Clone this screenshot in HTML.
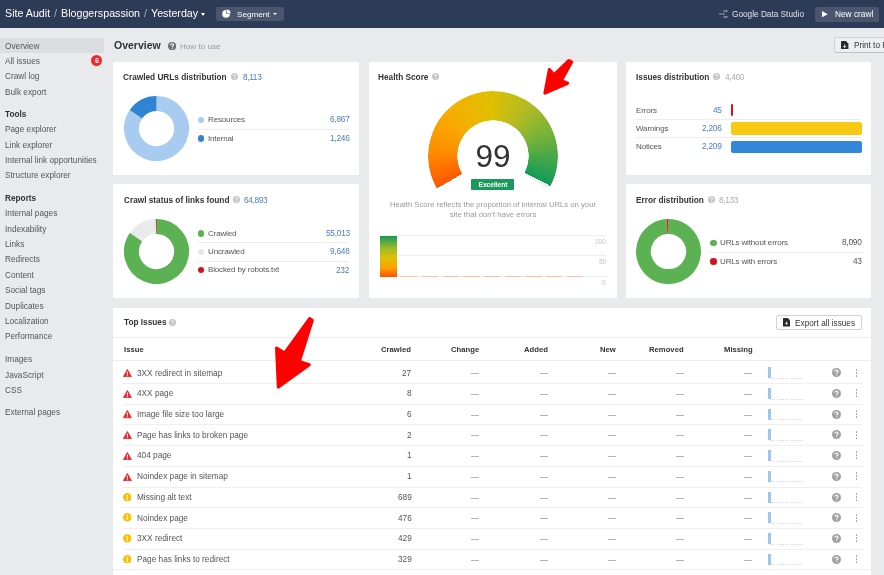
<!DOCTYPE html><html><head><meta charset="utf-8"><style>
html,body{margin:0;padding:0;width:884px;height:575px;overflow:hidden;background:#e9eaec;font-family:"Liberation Sans",sans-serif}
.t{position:absolute;white-space:nowrap;line-height:1.2;will-change:transform}
.r{position:absolute}
</style></head><body>
<div class="r" style="left:0.00px;top:0.00px;width:884.00px;height:28.00px;background:#2c3b56;"></div>
<div class="t" style="left:4.75px;top:6.87px;font-size:10.7px;color:#fff;">Site Audit</div>
<div class="t" style="left:53.90px;top:6.87px;font-size:10.7px;color:#a9b0bf;">/</div>
<div class="t" style="left:61.40px;top:6.87px;font-size:10.7px;color:#fff;">Bloggerspassion</div>
<div class="t" style="left:144.00px;top:6.87px;font-size:10.7px;color:#a9b0bf;">/</div>
<div class="t" style="left:151.20px;top:6.87px;font-size:10.7px;color:#fff;">Yesterday</div>
<div class="r" style="left:201px;top:12.5px;width:0;height:0;border-left:2.5px solid transparent;border-right:2.5px solid transparent;border-top:3px solid #fff"></div>
<div class="r" style="left:216.00px;top:6.80px;width:68.00px;height:14.70px;background:#4a566e;border-radius:2px"></div>
<svg class="r" style="left:221.8px;top:9.0px" width="9" height="9" viewBox="0 0 10 10"><path d="M4.4 1.2 A4.3 4.3 0 1 0 8.8 5.6 L4.4 5.6 Z" fill="#fff"/><path d="M5.1 0.5 A4.3 4.3 0 0 1 9.5 4.9 L5.1 4.9Z" fill="#fff"/></svg>
<div class="t" style="left:236.50px;top:10.13px;font-size:8.1px;color:#fff;">Segment</div>
<div class="r" style="left:273px;top:13px;width:0;height:0;border-left:2.2px solid transparent;border-right:2.2px solid transparent;border-top:2.6px solid #fff"></div>
<svg class="r" style="left:719px;top:10px" width="9" height="8" viewBox="0 0 9 8"><g fill="#9aa3b3"><circle cx="7.5" cy="1" r="1"/><circle cx="7.5" cy="7" r="1"/><circle cx="4.5" cy="4" r="1"/><rect x="0" y="3.5" width="3" height="1"/><rect x="4" y="0.5" width="3" height="1"/><rect x="4" y="6.5" width="3" height="1"/></g></svg>
<div class="t" style="left:731.60px;top:10.09px;font-size:8.25px;color:#dfe2e8;">Google Data Studio</div>
<div class="r" style="left:814.70px;top:6.70px;width:64.70px;height:14.90px;background:#4a566e;border-radius:2px"></div>
<svg class="r" style="left:822.4px;top:11.4px" width="5.8" height="6.4" viewBox="0 0 6 6.4"><path d="M0 0 L6 3.2 L0 6.4Z" fill="#fff"/></svg>
<div class="t" style="left:834.90px;top:10.04px;font-size:8.3px;color:#fff;">New crawl</div>
<div class="r" style="left:0.00px;top:37.90px;width:104.00px;height:14.70px;background:#dcdddf;"></div>
<div class="t" style="left:4.90px;top:41.59px;font-size:8.25px;color:#555;">Overview</div>
<div class="t" style="left:4.90px;top:56.99px;font-size:8.25px;color:#555;">All issues</div>
<div class="t" style="left:4.90px;top:72.39px;font-size:8.25px;color:#555;">Crawl log</div>
<div class="t" style="left:4.90px;top:87.79px;font-size:8.25px;color:#555;">Bulk export</div>
<div class="r" style="left:91.10px;top:55.40px;width:10.8px;height:10.8px;border-radius:50%;background:#ee2a2f"></div>
<div class="t" style="left:-103.40px;width:400px;text-align:center;top:56.69px;font-size:7.2px;color:#fff;font-weight:bold;">6</div>
<div class="t" style="left:4.90px;top:109.79px;font-size:8.25px;color:#333;font-weight:bold;">Tools</div>
<div class="t" style="left:4.90px;top:125.19px;font-size:8.25px;color:#555;">Page explorer</div>
<div class="t" style="left:4.90px;top:140.59px;font-size:8.25px;color:#555;">Link explorer</div>
<div class="t" style="left:4.90px;top:155.99px;font-size:8.25px;color:#555;">Internal link opportunities</div>
<div class="t" style="left:4.90px;top:171.39px;font-size:8.25px;color:#555;">Structure explorer</div>
<div class="t" style="left:4.90px;top:193.89px;font-size:8.25px;color:#333;font-weight:bold;">Reports</div>
<div class="t" style="left:4.90px;top:209.29px;font-size:8.25px;color:#555;">Internal pages</div>
<div class="t" style="left:4.90px;top:224.69px;font-size:8.25px;color:#555;">Indexability</div>
<div class="t" style="left:4.90px;top:240.09px;font-size:8.25px;color:#555;">Links</div>
<div class="t" style="left:4.90px;top:255.49px;font-size:8.25px;color:#555;">Redirects</div>
<div class="t" style="left:4.90px;top:270.89px;font-size:8.25px;color:#555;">Content</div>
<div class="t" style="left:4.90px;top:286.29px;font-size:8.25px;color:#555;">Social tags</div>
<div class="t" style="left:4.90px;top:301.69px;font-size:8.25px;color:#555;">Duplicates</div>
<div class="t" style="left:4.90px;top:317.09px;font-size:8.25px;color:#555;">Localization</div>
<div class="t" style="left:4.90px;top:332.49px;font-size:8.25px;color:#555;">Performance</div>
<div class="t" style="left:4.90px;top:355.19px;font-size:8.25px;color:#555;">Images</div>
<div class="t" style="left:4.90px;top:370.59px;font-size:8.25px;color:#555;">JavaScript</div>
<div class="t" style="left:4.90px;top:385.99px;font-size:8.25px;color:#555;">CSS</div>
<div class="t" style="left:4.90px;top:408.39px;font-size:8.25px;color:#555;">External pages</div>
<div class="t" style="left:114.00px;top:38.56px;font-size:10.5px;color:#333;font-weight:bold;">Overview</div>
<svg class="r" style="left:168.10px;top:41.90px" width="8.2" height="8.2" viewBox="0 0 10 10"><circle cx="5" cy="5" r="5" fill="#6f6f6f"/><path d="M3.3 3.9 C3.3 2.8 4.1 2.2 5 2.2 C6 2.2 6.7 2.8 6.7 3.7 C6.7 4.7 5.3 4.9 5.3 6.1" fill="none" stroke="#fff" stroke-width="1.3"/><circle cx="5.3" cy="7.6" r="0.75" fill="#fff"/></svg>
<div class="t" style="left:180.10px;top:42.13px;font-size:8.1px;color:#9a9a9a;">How to use</div>
<div class="r" style="left:834.30px;top:37.00px;width:60.00px;height:15.60px;background:#eeeff0;border:1px solid #cfd0d2;border-bottom-color:#bfc0c2;border-radius:2px;box-sizing:border-box"></div>
<svg class="r" style="left:841.2px;top:40.6px" width="7.4" height="8.8" viewBox="0 0 7.4 8.8"><path d="M0.6 0 H4.9 L7.4 2.5 V8.2 Q7.4 8.8 6.8 8.8 H0.6 Q0 8.8 0 8.2 V0.6 Q0 0 0.6 0Z" fill="#2a2a2a"/><path d="M3.7 3.6 V6.4 M2.5 5.2 L3.7 6.5 L4.9 5.2" stroke="#fff" stroke-width="0.9" fill="none"/></svg>
<div class="t" style="left:853.70px;top:40.84px;font-size:8.2px;color:#333;">Print to PDF</div>
<div class="r" style="left:113.30px;top:61.50px;width:245.50px;height:113.30px;background:#fff;"></div>
<div class="r" style="left:368.50px;top:61.50px;width:248.70px;height:236.50px;background:#fff;"></div>
<div class="r" style="left:626.10px;top:61.50px;width:245.40px;height:113.30px;background:#fff;"></div>
<div class="r" style="left:113.30px;top:184.40px;width:245.50px;height:113.50px;background:#fff;"></div>
<div class="r" style="left:626.10px;top:184.40px;width:245.40px;height:113.50px;background:#fff;"></div>
<div class="r" style="left:113.30px;top:307.80px;width:758.20px;height:280.00px;background:#fff;"></div>
<div class="t" style="left:123.30px;top:72.69px;font-size:8.25px;color:#333;font-weight:bold;">Crawled URLs distribution</div>
<svg class="r" style="left:230.80px;top:73.00px" width="7" height="7" viewBox="0 0 10 10"><circle cx="5" cy="5" r="5" fill="#c4c4c4"/><path d="M3.3 3.9 C3.3 2.8 4.1 2.2 5 2.2 C6 2.2 6.7 2.8 6.7 3.7 C6.7 4.7 5.3 4.9 5.3 6.1" fill="none" stroke="#fff" stroke-width="1.3"/><circle cx="5.3" cy="7.6" r="0.75" fill="#fff"/></svg>
<div class="t" style="left:242.70px;top:72.74px;font-size:8.3px;color:#4a7ec0;letter-spacing:-0.35px">8,113</div>
<svg class="r" style="left:123.60px;top:95.80px" width="65.00" height="65.00" viewBox="-32.5 -32.5 65.0 65.0"><path d="M0.000 -25.050 A25.05 25.05 0 1 1 -20.592 -14.264" fill="none" stroke="#a8ccef" stroke-width="14.899999999999999"/><path d="M-20.592 -14.264 A25.05 25.05 0 0 1 0.000 -25.050" fill="none" stroke="#2f84d4" stroke-width="14.899999999999999"/></svg>
<div class="r" style="left:197.70px;top:116.60px;width:6.6px;height:6.6px;border-radius:50%;background:#a8ccef"></div>
<div class="t" style="left:207.60px;top:115.13px;font-size:8.0px;color:#555;letter-spacing:-0.15px">Resources</div>
<div class="t" style="right:534.40px;top:115.34px;font-size:8.3px;color:#4a7ec0;letter-spacing:-0.25px">6,867</div>
<div class="r" style="left:197.90px;top:129.10px;width:151.70px;height:0.80px;background:#ededed;"></div>
<div class="r" style="left:197.70px;top:135.00px;width:6.6px;height:6.6px;border-radius:50%;background:#2f84d4"></div>
<div class="t" style="left:207.60px;top:133.53px;font-size:8.0px;color:#555;letter-spacing:-0.15px">Internal</div>
<div class="t" style="right:534.40px;top:133.74px;font-size:8.3px;color:#4a7ec0;letter-spacing:-0.25px">1,246</div>
<div class="t" style="left:635.70px;top:72.69px;font-size:8.25px;color:#333;font-weight:bold;">Issues distribution</div>
<svg class="r" style="left:712.70px;top:73.00px" width="7" height="7" viewBox="0 0 10 10"><circle cx="5" cy="5" r="5" fill="#c4c4c4"/><path d="M3.3 3.9 C3.3 2.8 4.1 2.2 5 2.2 C6 2.2 6.7 2.8 6.7 3.7 C6.7 4.7 5.3 4.9 5.3 6.1" fill="none" stroke="#fff" stroke-width="1.3"/><circle cx="5.3" cy="7.6" r="0.75" fill="#fff"/></svg>
<div class="t" style="left:724.80px;top:72.74px;font-size:8.3px;color:#ababab;letter-spacing:-0.35px">4,460</div>
<div class="t" style="left:635.70px;top:105.63px;font-size:8.0px;color:#555;letter-spacing:-0.15px">Errors</div>
<div class="t" style="right:162.50px;top:105.84px;font-size:8.3px;color:#4a7ec0;letter-spacing:-0.25px">45</div>
<div class="r" style="left:730.90px;top:103.70px;width:2.50px;height:12.60px;background:#d0141b;border-radius:1px"></div>
<div class="r" style="left:635.70px;top:118.60px;width:225.30px;height:0.80px;background:#ededed;"></div>
<div class="t" style="left:635.70px;top:123.73px;font-size:8.0px;color:#555;letter-spacing:-0.15px">Warnings</div>
<div class="t" style="right:162.50px;top:123.94px;font-size:8.3px;color:#4a7ec0;letter-spacing:-0.25px">2,206</div>
<div class="r" style="left:730.90px;top:121.80px;width:131.10px;height:13.10px;background:#f8c913;border-radius:2px"></div>
<div class="r" style="left:635.70px;top:136.70px;width:225.30px;height:0.80px;background:#ededed;"></div>
<div class="t" style="left:635.70px;top:141.83px;font-size:8.0px;color:#555;letter-spacing:-0.15px">Notices</div>
<div class="t" style="right:162.50px;top:142.04px;font-size:8.3px;color:#4a7ec0;letter-spacing:-0.25px">2,209</div>
<div class="r" style="left:730.90px;top:140.50px;width:131.10px;height:12.80px;background:#3487d8;border-radius:2px"></div>
<div class="t" style="left:123.50px;top:195.59px;font-size:8.25px;color:#333;font-weight:bold;">Crawl status of links found</div>
<svg class="r" style="left:233.00px;top:195.80px" width="7" height="7" viewBox="0 0 10 10"><circle cx="5" cy="5" r="5" fill="#c4c4c4"/><path d="M3.3 3.9 C3.3 2.8 4.1 2.2 5 2.2 C6 2.2 6.7 2.8 6.7 3.7 C6.7 4.7 5.3 4.9 5.3 6.1" fill="none" stroke="#fff" stroke-width="1.3"/><circle cx="5.3" cy="7.6" r="0.75" fill="#fff"/></svg>
<div class="t" style="left:244.20px;top:195.64px;font-size:8.3px;color:#4a7ec0;letter-spacing:-0.35px">64,893</div>
<svg class="r" style="left:123.80px;top:218.70px" width="65.00" height="65.00" viewBox="-32.5 -32.5 65.0 65.0"><path d="M0.000 -25.050 A25.05 25.05 0 1 1 -20.472 -14.436" fill="none" stroke="#5cb152" stroke-width="14.899999999999999"/><path d="M-20.472 -14.436 A25.05 25.05 0 0 1 -0.563 -25.044" fill="none" stroke="#e9eaec" stroke-width="14.899999999999999"/><path d="M-0.563 -25.044 A25.05 25.05 0 0 1 0.224 -25.049" fill="none" stroke="#b8302a" stroke-width="14.899999999999999"/></svg>
<div class="r" style="left:197.50px;top:230.20px;width:6.6px;height:6.6px;border-radius:50%;background:#5cb152"></div>
<div class="t" style="left:207.50px;top:228.73px;font-size:8.0px;color:#555;letter-spacing:-0.15px">Crawled</div>
<div class="t" style="right:534.50px;top:228.94px;font-size:8.3px;color:#4a7ec0;letter-spacing:-0.25px">55,013</div>
<div class="r" style="left:197.90px;top:242.30px;width:151.60px;height:0.80px;background:#ededed;"></div>
<div class="r" style="left:197.50px;top:248.60px;width:6.6px;height:6.6px;border-radius:50%;background:#e6e6e6"></div>
<div class="t" style="left:207.50px;top:247.03px;font-size:8.0px;color:#555;letter-spacing:-0.15px">Uncrawled</div>
<div class="t" style="right:534.50px;top:247.24px;font-size:8.3px;color:#4a7ec0;letter-spacing:-0.25px">9,648</div>
<div class="r" style="left:197.90px;top:260.60px;width:151.60px;height:0.80px;background:#ededed;"></div>
<div class="r" style="left:197.50px;top:266.90px;width:6.6px;height:6.6px;border-radius:50%;background:#d0141b"></div>
<div class="t" style="left:207.50px;top:265.33px;font-size:8.0px;color:#555;letter-spacing:-0.15px">Blocked by robots.txt</div>
<div class="t" style="right:534.50px;top:265.54px;font-size:8.3px;color:#4a7ec0;letter-spacing:-0.25px">232</div>
<div class="t" style="left:635.80px;top:195.59px;font-size:8.25px;color:#333;font-weight:bold;">Error distribution</div>
<svg class="r" style="left:707.60px;top:196.00px" width="7" height="7" viewBox="0 0 10 10"><circle cx="5" cy="5" r="5" fill="#c4c4c4"/><path d="M3.3 3.9 C3.3 2.8 4.1 2.2 5 2.2 C6 2.2 6.7 2.8 6.7 3.7 C6.7 4.7 5.3 4.9 5.3 6.1" fill="none" stroke="#fff" stroke-width="1.3"/><circle cx="5.3" cy="7.6" r="0.75" fill="#fff"/></svg>
<div class="t" style="left:719.20px;top:195.64px;font-size:8.3px;color:#ababab;letter-spacing:-0.35px">8,133</div>
<svg class="r" style="left:635.90px;top:218.90px" width="65.00" height="65.00" viewBox="-32.5 -32.5 65.0 65.0"><path d="M0.000 -25.050 A25.05 25.05 0 1 1 -1.573 -25.001" fill="none" stroke="#5cb152" stroke-width="14.899999999999999"/><path d="M-1.573 -25.001 A25.05 25.05 0 0 1 -0.000 -25.050" fill="none" stroke="#b3361f" stroke-width="14.899999999999999"/></svg>
<div class="r" style="left:710.20px;top:239.60px;width:6.6px;height:6.6px;border-radius:50%;background:#5cb152"></div>
<div class="t" style="left:720.00px;top:238.03px;font-size:8.0px;color:#555;letter-spacing:-0.15px">URLs without errors</div>
<div class="t" style="right:22.10px;top:238.24px;font-size:8.3px;color:#555;letter-spacing:-0.25px">8,090</div>
<div class="r" style="left:710.20px;top:252.00px;width:151.70px;height:0.80px;background:#ededed;"></div>
<div class="r" style="left:710.20px;top:258.10px;width:6.6px;height:6.6px;border-radius:50%;background:#d0141b"></div>
<div class="t" style="left:720.00px;top:256.53px;font-size:8.0px;color:#555;letter-spacing:-0.15px">URLs with errors</div>
<div class="t" style="right:22.10px;top:256.74px;font-size:8.3px;color:#555;letter-spacing:-0.25px">43</div>
<div class="t" style="left:377.90px;top:72.69px;font-size:8.25px;color:#333;font-weight:bold;">Health Score</div>
<svg class="r" style="left:432.00px;top:73.00px" width="7" height="7" viewBox="0 0 10 10"><circle cx="5" cy="5" r="5" fill="#c4c4c4"/><path d="M3.3 3.9 C3.3 2.8 4.1 2.2 5 2.2 C6 2.2 6.7 2.8 6.7 3.7 C6.7 4.7 5.3 4.9 5.3 6.1" fill="none" stroke="#fff" stroke-width="1.3"/><circle cx="5.3" cy="7.6" r="0.75" fill="#fff"/></svg>
<div class="r" style="left:427.70px;top:90.70px;width:130.0px;height:130.0px;border-radius:50%;background:conic-gradient(from 240deg, #ff5800 0deg, #fd8d00 35deg, #f6ae00 75deg, #dfc000 118deg, #b2bb22 155deg, #72b23a 190deg, #129b5a 237.6deg, #ececec 237.6deg, #ececec 240deg, transparent 240deg);-webkit-mask:radial-gradient(circle at center, transparent 35.4px, #000 35.9px);"></div>
<div class="t" style="left:292.70px;width:400px;text-align:center;top:137.59px;font-size:31.5px;color:#333;">99</div>
<div class="r" style="left:471.30px;top:179.30px;width:42.40px;height:10.50px;background:#19995a;border-radius:1px"></div>
<div class="t" style="left:292.50px;width:400px;text-align:center;top:181.05px;font-size:6.6px;color:#fff;font-weight:bold;">Excellent</div>
<div class="t" style="left:292.50px;width:400px;text-align:center;top:200.21px;font-size:7.7px;color:#999;">Health Score reflects the proportion of internal URLs on your</div>
<div class="t" style="left:292.50px;width:400px;text-align:center;top:209.81px;font-size:7.7px;color:#999;">site that don&#39;t have errors</div>
<div class="r" style="left:380.00px;top:235.20px;width:226.00px;height:0.80px;background:#eeeeee;"></div>
<div class="r" style="left:380.00px;top:255.00px;width:226.00px;height:0.80px;background:#eeeeee;"></div>
<div class="r" style="left:380.00px;top:276.00px;width:226.00px;height:0.80px;background:#eeeeee;"></div>
<div class="r" style="left:379.90px;top:235.80px;width:17.00px;height:41.00px;background:linear-gradient(#169a5b, #9cbb25 30%, #e2c000 55%, #fca000 78%, #ff5000);"></div>
<div class="r" style="left:401.10px;top:275.90px;width:16.40px;height:1.00px;background:#f6c1a6;"></div>
<div class="r" style="left:421.80px;top:275.90px;width:16.40px;height:1.00px;background:#f6c1a6;"></div>
<div class="r" style="left:442.50px;top:275.90px;width:16.40px;height:1.00px;background:#f6c1a6;"></div>
<div class="r" style="left:463.20px;top:275.90px;width:16.40px;height:1.00px;background:#f6c1a6;"></div>
<div class="r" style="left:483.90px;top:275.90px;width:16.40px;height:1.00px;background:#f6c1a6;"></div>
<div class="r" style="left:504.60px;top:275.90px;width:16.40px;height:1.00px;background:#f6c1a6;"></div>
<div class="r" style="left:525.30px;top:275.90px;width:16.40px;height:1.00px;background:#f6c1a6;"></div>
<div class="r" style="left:546.00px;top:275.90px;width:16.40px;height:1.00px;background:#f6c1a6;"></div>
<div class="r" style="left:566.70px;top:275.90px;width:16.40px;height:1.00px;background:#f6c1a6;"></div>
<div class="t" style="right:278.00px;top:237.55px;font-size:6.5px;color:#c2c2c2;">100</div>
<div class="t" style="right:278.00px;top:257.75px;font-size:6.5px;color:#c2c2c2;">50</div>
<div class="t" style="right:278.00px;top:278.95px;font-size:6.5px;color:#c2c2c2;">0</div>
<div class="t" style="left:123.50px;top:317.89px;font-size:8.25px;color:#333;font-weight:bold;">Top Issues</div>
<svg class="r" style="left:168.90px;top:318.80px" width="7" height="7" viewBox="0 0 10 10"><circle cx="5" cy="5" r="5" fill="#c4c4c4"/><path d="M3.3 3.9 C3.3 2.8 4.1 2.2 5 2.2 C6 2.2 6.7 2.8 6.7 3.7 C6.7 4.7 5.3 4.9 5.3 6.1" fill="none" stroke="#fff" stroke-width="1.3"/><circle cx="5.3" cy="7.6" r="0.75" fill="#fff"/></svg>
<div class="r" style="left:776.20px;top:315.10px;width:85.40px;height:15.10px;background:#fff;border:1px solid #d0d0d0;border-radius:2px;box-sizing:border-box"></div>
<svg class="r" style="left:782.8px;top:318.1px" width="7.2" height="8.7" viewBox="0 0 7.4 8.8"><path d="M0.6 0 H4.9 L7.4 2.5 V8.2 Q7.4 8.8 6.8 8.8 H0.6 Q0 8.8 0 8.2 V0.6 Q0 0 0.6 0Z" fill="#2a2a2a"/><path d="M3.7 3.6 V6.4 M2.5 5.2 L3.7 6.5 L4.9 5.2" stroke="#fff" stroke-width="0.9" fill="none"/></svg>
<div class="t" style="left:795.40px;top:318.59px;font-size:8.25px;color:#333;">Export all issues</div>
<div class="r" style="left:113.30px;top:337.30px;width:758.40px;height:0.80px;background:#ececec;"></div>
<div class="t" style="left:123.50px;top:345.21px;font-size:7.7px;color:#333;font-weight:bold;">Issue</div>
<div class="t" style="right:472.70px;top:345.21px;font-size:7.7px;color:#333;font-weight:bold;">Crawled</div>
<div class="t" style="right:404.80px;top:345.21px;font-size:7.7px;color:#333;font-weight:bold;">Change</div>
<div class="t" style="right:336.40px;top:345.21px;font-size:7.7px;color:#333;font-weight:bold;">Added</div>
<div class="t" style="right:268.30px;top:345.21px;font-size:7.7px;color:#333;font-weight:bold;">New</div>
<div class="t" style="right:200.20px;top:345.21px;font-size:7.7px;color:#333;font-weight:bold;">Removed</div>
<div class="t" style="right:131.60px;top:345.21px;font-size:7.7px;color:#333;font-weight:bold;">Missing</div>
<div class="r" style="left:113.30px;top:359.80px;width:758.40px;height:0.80px;background:#ececec;"></div>
<svg class="r" style="left:122.9px;top:369.00px" width="8.8" height="8.2" viewBox="0 0 10 9.3"><path d="M5 0.5 L9.6 8.8 H0.4Z" fill="#e8262b" stroke="#e8262b" stroke-width="0.9" stroke-linejoin="round"/><rect x="4.4" y="3.0" width="1.2" height="3.4" fill="#fff"/><rect x="4.4" y="7.0" width="1.2" height="1.1" fill="#fff"/></svg>
<div class="t" style="left:137.10px;top:368.59px;font-size:8.25px;color:#555;">3XX redirect in sitemap</div>
<div class="t" style="right:472.70px;top:368.59px;font-size:8.25px;color:#555;">27</div>
<div class="r" style="left:471.10px;top:373.20px;width:8.10px;height:0.80px;background:#b5b5b5;"></div>
<div class="r" style="left:539.50px;top:373.20px;width:8.10px;height:0.80px;background:#b5b5b5;"></div>
<div class="r" style="left:607.60px;top:373.20px;width:8.10px;height:0.80px;background:#b5b5b5;"></div>
<div class="r" style="left:675.70px;top:373.20px;width:8.10px;height:0.80px;background:#b5b5b5;"></div>
<div class="r" style="left:744.30px;top:373.20px;width:8.10px;height:0.80px;background:#b5b5b5;"></div>
<div class="r" style="left:768.00px;top:367.20px;width:2.60px;height:11.00px;background:#9ec5ee;"></div>
<div class="r" style="left:771.00px;top:377.80px;width:32.00px;height:1.00px;background:repeating-linear-gradient(90deg, #dedede 0 1.6px, transparent 1.6px 2.8px);"></div>
<svg class="r" style="left:832.00px;top:368.30px" width="9" height="9" viewBox="0 0 10 10"><circle cx="5" cy="5" r="5" fill="#a0a0a0"/><path d="M3.3 3.9 C3.3 2.8 4.1 2.2 5 2.2 C6 2.2 6.7 2.8 6.7 3.7 C6.7 4.7 5.3 4.9 5.3 6.1" fill="none" stroke="#fff" stroke-width="1.3"/><circle cx="5.3" cy="7.6" r="0.75" fill="#fff"/></svg>
<div class="r" style="left:855.60px;top:369.10px;width:1.80px;height:1.80px;background:#999;border-radius:0.6px"></div>
<div class="r" style="left:855.60px;top:372.10px;width:1.80px;height:1.80px;background:#999;border-radius:0.6px"></div>
<div class="r" style="left:855.60px;top:375.10px;width:1.80px;height:1.80px;background:#999;border-radius:0.6px"></div>
<div class="r" style="left:123.00px;top:382.90px;width:739.00px;height:0.80px;background:#efefef;"></div>
<svg class="r" style="left:122.9px;top:389.72px" width="8.8" height="8.2" viewBox="0 0 10 9.3"><path d="M5 0.5 L9.6 8.8 H0.4Z" fill="#e8262b" stroke="#e8262b" stroke-width="0.9" stroke-linejoin="round"/><rect x="4.4" y="3.0" width="1.2" height="3.4" fill="#fff"/><rect x="4.4" y="7.0" width="1.2" height="1.1" fill="#fff"/></svg>
<div class="t" style="left:137.10px;top:389.31px;font-size:8.25px;color:#555;">4XX page</div>
<div class="t" style="right:472.70px;top:389.31px;font-size:8.25px;color:#555;">8</div>
<div class="r" style="left:471.10px;top:393.92px;width:8.10px;height:0.80px;background:#b5b5b5;"></div>
<div class="r" style="left:539.50px;top:393.92px;width:8.10px;height:0.80px;background:#b5b5b5;"></div>
<div class="r" style="left:607.60px;top:393.92px;width:8.10px;height:0.80px;background:#b5b5b5;"></div>
<div class="r" style="left:675.70px;top:393.92px;width:8.10px;height:0.80px;background:#b5b5b5;"></div>
<div class="r" style="left:744.30px;top:393.92px;width:8.10px;height:0.80px;background:#b5b5b5;"></div>
<div class="r" style="left:768.00px;top:387.92px;width:2.60px;height:11.00px;background:#9ec5ee;"></div>
<div class="r" style="left:771.00px;top:398.52px;width:32.00px;height:1.00px;background:repeating-linear-gradient(90deg, #dedede 0 1.6px, transparent 1.6px 2.8px);"></div>
<svg class="r" style="left:832.00px;top:389.02px" width="9" height="9" viewBox="0 0 10 10"><circle cx="5" cy="5" r="5" fill="#a0a0a0"/><path d="M3.3 3.9 C3.3 2.8 4.1 2.2 5 2.2 C6 2.2 6.7 2.8 6.7 3.7 C6.7 4.7 5.3 4.9 5.3 6.1" fill="none" stroke="#fff" stroke-width="1.3"/><circle cx="5.3" cy="7.6" r="0.75" fill="#fff"/></svg>
<div class="r" style="left:855.60px;top:389.10px;width:1.80px;height:1.80px;background:#999;border-radius:0.6px"></div>
<div class="r" style="left:855.60px;top:392.10px;width:1.80px;height:1.80px;background:#999;border-radius:0.6px"></div>
<div class="r" style="left:855.60px;top:395.10px;width:1.80px;height:1.80px;background:#999;border-radius:0.6px"></div>
<div class="r" style="left:123.00px;top:403.62px;width:739.00px;height:0.80px;background:#efefef;"></div>
<svg class="r" style="left:122.9px;top:410.44px" width="8.8" height="8.2" viewBox="0 0 10 9.3"><path d="M5 0.5 L9.6 8.8 H0.4Z" fill="#e8262b" stroke="#e8262b" stroke-width="0.9" stroke-linejoin="round"/><rect x="4.4" y="3.0" width="1.2" height="3.4" fill="#fff"/><rect x="4.4" y="7.0" width="1.2" height="1.1" fill="#fff"/></svg>
<div class="t" style="left:137.10px;top:410.03px;font-size:8.25px;color:#555;">Image file size too large</div>
<div class="t" style="right:472.70px;top:410.03px;font-size:8.25px;color:#555;">6</div>
<div class="r" style="left:471.10px;top:414.64px;width:8.10px;height:0.80px;background:#b5b5b5;"></div>
<div class="r" style="left:539.50px;top:414.64px;width:8.10px;height:0.80px;background:#b5b5b5;"></div>
<div class="r" style="left:607.60px;top:414.64px;width:8.10px;height:0.80px;background:#b5b5b5;"></div>
<div class="r" style="left:675.70px;top:414.64px;width:8.10px;height:0.80px;background:#b5b5b5;"></div>
<div class="r" style="left:744.30px;top:414.64px;width:8.10px;height:0.80px;background:#b5b5b5;"></div>
<div class="r" style="left:768.00px;top:408.64px;width:2.60px;height:11.00px;background:#9ec5ee;"></div>
<div class="r" style="left:771.00px;top:419.24px;width:32.00px;height:1.00px;background:repeating-linear-gradient(90deg, #dedede 0 1.6px, transparent 1.6px 2.8px);"></div>
<svg class="r" style="left:832.00px;top:409.74px" width="9" height="9" viewBox="0 0 10 10"><circle cx="5" cy="5" r="5" fill="#a0a0a0"/><path d="M3.3 3.9 C3.3 2.8 4.1 2.2 5 2.2 C6 2.2 6.7 2.8 6.7 3.7 C6.7 4.7 5.3 4.9 5.3 6.1" fill="none" stroke="#fff" stroke-width="1.3"/><circle cx="5.3" cy="7.6" r="0.75" fill="#fff"/></svg>
<div class="r" style="left:855.60px;top:410.10px;width:1.80px;height:1.80px;background:#999;border-radius:0.6px"></div>
<div class="r" style="left:855.60px;top:413.10px;width:1.80px;height:1.80px;background:#999;border-radius:0.6px"></div>
<div class="r" style="left:855.60px;top:416.10px;width:1.80px;height:1.80px;background:#999;border-radius:0.6px"></div>
<div class="r" style="left:123.00px;top:424.34px;width:739.00px;height:0.80px;background:#efefef;"></div>
<svg class="r" style="left:122.9px;top:431.16px" width="8.8" height="8.2" viewBox="0 0 10 9.3"><path d="M5 0.5 L9.6 8.8 H0.4Z" fill="#e8262b" stroke="#e8262b" stroke-width="0.9" stroke-linejoin="round"/><rect x="4.4" y="3.0" width="1.2" height="3.4" fill="#fff"/><rect x="4.4" y="7.0" width="1.2" height="1.1" fill="#fff"/></svg>
<div class="t" style="left:137.10px;top:430.75px;font-size:8.25px;color:#555;">Page has links to broken page</div>
<div class="t" style="right:472.70px;top:430.75px;font-size:8.25px;color:#555;">2</div>
<div class="r" style="left:471.10px;top:435.36px;width:8.10px;height:0.80px;background:#b5b5b5;"></div>
<div class="r" style="left:539.50px;top:435.36px;width:8.10px;height:0.80px;background:#b5b5b5;"></div>
<div class="r" style="left:607.60px;top:435.36px;width:8.10px;height:0.80px;background:#b5b5b5;"></div>
<div class="r" style="left:675.70px;top:435.36px;width:8.10px;height:0.80px;background:#b5b5b5;"></div>
<div class="r" style="left:744.30px;top:435.36px;width:8.10px;height:0.80px;background:#b5b5b5;"></div>
<div class="r" style="left:768.00px;top:429.36px;width:2.60px;height:11.00px;background:#9ec5ee;"></div>
<div class="r" style="left:771.00px;top:439.96px;width:32.00px;height:1.00px;background:repeating-linear-gradient(90deg, #dedede 0 1.6px, transparent 1.6px 2.8px);"></div>
<svg class="r" style="left:832.00px;top:430.46px" width="9" height="9" viewBox="0 0 10 10"><circle cx="5" cy="5" r="5" fill="#a0a0a0"/><path d="M3.3 3.9 C3.3 2.8 4.1 2.2 5 2.2 C6 2.2 6.7 2.8 6.7 3.7 C6.7 4.7 5.3 4.9 5.3 6.1" fill="none" stroke="#fff" stroke-width="1.3"/><circle cx="5.3" cy="7.6" r="0.75" fill="#fff"/></svg>
<div class="r" style="left:855.60px;top:431.10px;width:1.80px;height:1.80px;background:#999;border-radius:0.6px"></div>
<div class="r" style="left:855.60px;top:434.10px;width:1.80px;height:1.80px;background:#999;border-radius:0.6px"></div>
<div class="r" style="left:855.60px;top:437.10px;width:1.80px;height:1.80px;background:#999;border-radius:0.6px"></div>
<div class="r" style="left:123.00px;top:445.06px;width:739.00px;height:0.80px;background:#efefef;"></div>
<svg class="r" style="left:122.9px;top:451.88px" width="8.8" height="8.2" viewBox="0 0 10 9.3"><path d="M5 0.5 L9.6 8.8 H0.4Z" fill="#e8262b" stroke="#e8262b" stroke-width="0.9" stroke-linejoin="round"/><rect x="4.4" y="3.0" width="1.2" height="3.4" fill="#fff"/><rect x="4.4" y="7.0" width="1.2" height="1.1" fill="#fff"/></svg>
<div class="t" style="left:137.10px;top:451.47px;font-size:8.25px;color:#555;">404 page</div>
<div class="t" style="right:472.70px;top:451.47px;font-size:8.25px;color:#555;">1</div>
<div class="r" style="left:471.10px;top:456.08px;width:8.10px;height:0.80px;background:#b5b5b5;"></div>
<div class="r" style="left:539.50px;top:456.08px;width:8.10px;height:0.80px;background:#b5b5b5;"></div>
<div class="r" style="left:607.60px;top:456.08px;width:8.10px;height:0.80px;background:#b5b5b5;"></div>
<div class="r" style="left:675.70px;top:456.08px;width:8.10px;height:0.80px;background:#b5b5b5;"></div>
<div class="r" style="left:744.30px;top:456.08px;width:8.10px;height:0.80px;background:#b5b5b5;"></div>
<div class="r" style="left:768.00px;top:450.08px;width:2.60px;height:11.00px;background:#9ec5ee;"></div>
<div class="r" style="left:771.00px;top:460.68px;width:32.00px;height:1.00px;background:repeating-linear-gradient(90deg, #dedede 0 1.6px, transparent 1.6px 2.8px);"></div>
<svg class="r" style="left:832.00px;top:451.18px" width="9" height="9" viewBox="0 0 10 10"><circle cx="5" cy="5" r="5" fill="#a0a0a0"/><path d="M3.3 3.9 C3.3 2.8 4.1 2.2 5 2.2 C6 2.2 6.7 2.8 6.7 3.7 C6.7 4.7 5.3 4.9 5.3 6.1" fill="none" stroke="#fff" stroke-width="1.3"/><circle cx="5.3" cy="7.6" r="0.75" fill="#fff"/></svg>
<div class="r" style="left:855.60px;top:451.10px;width:1.80px;height:1.80px;background:#999;border-radius:0.6px"></div>
<div class="r" style="left:855.60px;top:454.10px;width:1.80px;height:1.80px;background:#999;border-radius:0.6px"></div>
<div class="r" style="left:855.60px;top:457.10px;width:1.80px;height:1.80px;background:#999;border-radius:0.6px"></div>
<div class="r" style="left:123.00px;top:465.78px;width:739.00px;height:0.80px;background:#efefef;"></div>
<svg class="r" style="left:122.9px;top:472.60px" width="8.8" height="8.2" viewBox="0 0 10 9.3"><path d="M5 0.5 L9.6 8.8 H0.4Z" fill="#e8262b" stroke="#e8262b" stroke-width="0.9" stroke-linejoin="round"/><rect x="4.4" y="3.0" width="1.2" height="3.4" fill="#fff"/><rect x="4.4" y="7.0" width="1.2" height="1.1" fill="#fff"/></svg>
<div class="t" style="left:137.10px;top:472.19px;font-size:8.25px;color:#555;">Noindex page in sitemap</div>
<div class="t" style="right:472.70px;top:472.19px;font-size:8.25px;color:#555;">1</div>
<div class="r" style="left:471.10px;top:476.80px;width:8.10px;height:0.80px;background:#b5b5b5;"></div>
<div class="r" style="left:539.50px;top:476.80px;width:8.10px;height:0.80px;background:#b5b5b5;"></div>
<div class="r" style="left:607.60px;top:476.80px;width:8.10px;height:0.80px;background:#b5b5b5;"></div>
<div class="r" style="left:675.70px;top:476.80px;width:8.10px;height:0.80px;background:#b5b5b5;"></div>
<div class="r" style="left:744.30px;top:476.80px;width:8.10px;height:0.80px;background:#b5b5b5;"></div>
<div class="r" style="left:768.00px;top:470.80px;width:2.60px;height:11.00px;background:#9ec5ee;"></div>
<div class="r" style="left:771.00px;top:481.40px;width:32.00px;height:1.00px;background:repeating-linear-gradient(90deg, #dedede 0 1.6px, transparent 1.6px 2.8px);"></div>
<svg class="r" style="left:832.00px;top:471.90px" width="9" height="9" viewBox="0 0 10 10"><circle cx="5" cy="5" r="5" fill="#a0a0a0"/><path d="M3.3 3.9 C3.3 2.8 4.1 2.2 5 2.2 C6 2.2 6.7 2.8 6.7 3.7 C6.7 4.7 5.3 4.9 5.3 6.1" fill="none" stroke="#fff" stroke-width="1.3"/><circle cx="5.3" cy="7.6" r="0.75" fill="#fff"/></svg>
<div class="r" style="left:855.60px;top:472.10px;width:1.80px;height:1.80px;background:#999;border-radius:0.6px"></div>
<div class="r" style="left:855.60px;top:475.10px;width:1.80px;height:1.80px;background:#999;border-radius:0.6px"></div>
<div class="r" style="left:855.60px;top:478.10px;width:1.80px;height:1.80px;background:#999;border-radius:0.6px"></div>
<div class="r" style="left:123.00px;top:486.50px;width:739.00px;height:0.80px;background:#efefef;"></div>
<svg class="r" style="left:122.9px;top:492.52px" width="8.6" height="8.6" viewBox="0 0 10 10"><circle cx="5" cy="5" r="5" fill="#f7c400"/><rect x="4.35" y="4.1" width="1.3" height="3.8" fill="#fff"/><rect x="4.35" y="2.1" width="1.3" height="1.3" fill="#fff"/></svg>
<div class="t" style="left:137.10px;top:492.91px;font-size:8.25px;color:#555;">Missing alt text</div>
<div class="t" style="right:472.70px;top:492.91px;font-size:8.25px;color:#555;">689</div>
<div class="r" style="left:471.10px;top:497.52px;width:8.10px;height:0.80px;background:#b5b5b5;"></div>
<div class="r" style="left:539.50px;top:497.52px;width:8.10px;height:0.80px;background:#b5b5b5;"></div>
<div class="r" style="left:607.60px;top:497.52px;width:8.10px;height:0.80px;background:#b5b5b5;"></div>
<div class="r" style="left:675.70px;top:497.52px;width:8.10px;height:0.80px;background:#b5b5b5;"></div>
<div class="r" style="left:744.30px;top:497.52px;width:8.10px;height:0.80px;background:#b5b5b5;"></div>
<div class="r" style="left:768.00px;top:491.52px;width:2.60px;height:11.00px;background:#9ec5ee;"></div>
<div class="r" style="left:771.00px;top:502.12px;width:32.00px;height:1.00px;background:repeating-linear-gradient(90deg, #dedede 0 1.6px, transparent 1.6px 2.8px);"></div>
<svg class="r" style="left:832.00px;top:492.62px" width="9" height="9" viewBox="0 0 10 10"><circle cx="5" cy="5" r="5" fill="#a0a0a0"/><path d="M3.3 3.9 C3.3 2.8 4.1 2.2 5 2.2 C6 2.2 6.7 2.8 6.7 3.7 C6.7 4.7 5.3 4.9 5.3 6.1" fill="none" stroke="#fff" stroke-width="1.3"/><circle cx="5.3" cy="7.6" r="0.75" fill="#fff"/></svg>
<div class="r" style="left:855.60px;top:493.10px;width:1.80px;height:1.80px;background:#999;border-radius:0.6px"></div>
<div class="r" style="left:855.60px;top:496.10px;width:1.80px;height:1.80px;background:#999;border-radius:0.6px"></div>
<div class="r" style="left:855.60px;top:499.10px;width:1.80px;height:1.80px;background:#999;border-radius:0.6px"></div>
<div class="r" style="left:123.00px;top:507.22px;width:739.00px;height:0.80px;background:#efefef;"></div>
<svg class="r" style="left:122.9px;top:513.24px" width="8.6" height="8.6" viewBox="0 0 10 10"><circle cx="5" cy="5" r="5" fill="#f7c400"/><rect x="4.35" y="4.1" width="1.3" height="3.8" fill="#fff"/><rect x="4.35" y="2.1" width="1.3" height="1.3" fill="#fff"/></svg>
<div class="t" style="left:137.10px;top:513.63px;font-size:8.25px;color:#555;">Noindex page</div>
<div class="t" style="right:472.70px;top:513.63px;font-size:8.25px;color:#555;">476</div>
<div class="r" style="left:471.10px;top:518.24px;width:8.10px;height:0.80px;background:#b5b5b5;"></div>
<div class="r" style="left:539.50px;top:518.24px;width:8.10px;height:0.80px;background:#b5b5b5;"></div>
<div class="r" style="left:607.60px;top:518.24px;width:8.10px;height:0.80px;background:#b5b5b5;"></div>
<div class="r" style="left:675.70px;top:518.24px;width:8.10px;height:0.80px;background:#b5b5b5;"></div>
<div class="r" style="left:744.30px;top:518.24px;width:8.10px;height:0.80px;background:#b5b5b5;"></div>
<div class="r" style="left:768.00px;top:512.24px;width:2.60px;height:11.00px;background:#9ec5ee;"></div>
<div class="r" style="left:771.00px;top:522.84px;width:32.00px;height:1.00px;background:repeating-linear-gradient(90deg, #dedede 0 1.6px, transparent 1.6px 2.8px);"></div>
<svg class="r" style="left:832.00px;top:513.34px" width="9" height="9" viewBox="0 0 10 10"><circle cx="5" cy="5" r="5" fill="#a0a0a0"/><path d="M3.3 3.9 C3.3 2.8 4.1 2.2 5 2.2 C6 2.2 6.7 2.8 6.7 3.7 C6.7 4.7 5.3 4.9 5.3 6.1" fill="none" stroke="#fff" stroke-width="1.3"/><circle cx="5.3" cy="7.6" r="0.75" fill="#fff"/></svg>
<div class="r" style="left:855.60px;top:514.10px;width:1.80px;height:1.80px;background:#999;border-radius:0.6px"></div>
<div class="r" style="left:855.60px;top:517.10px;width:1.80px;height:1.80px;background:#999;border-radius:0.6px"></div>
<div class="r" style="left:855.60px;top:520.10px;width:1.80px;height:1.80px;background:#999;border-radius:0.6px"></div>
<div class="r" style="left:123.00px;top:527.94px;width:739.00px;height:0.80px;background:#efefef;"></div>
<svg class="r" style="left:122.9px;top:533.96px" width="8.6" height="8.6" viewBox="0 0 10 10"><circle cx="5" cy="5" r="5" fill="#f7c400"/><rect x="4.35" y="4.1" width="1.3" height="3.8" fill="#fff"/><rect x="4.35" y="2.1" width="1.3" height="1.3" fill="#fff"/></svg>
<div class="t" style="left:137.10px;top:534.35px;font-size:8.25px;color:#555;">3XX redirect</div>
<div class="t" style="right:472.70px;top:534.35px;font-size:8.25px;color:#555;">429</div>
<div class="r" style="left:471.10px;top:538.96px;width:8.10px;height:0.80px;background:#b5b5b5;"></div>
<div class="r" style="left:539.50px;top:538.96px;width:8.10px;height:0.80px;background:#b5b5b5;"></div>
<div class="r" style="left:607.60px;top:538.96px;width:8.10px;height:0.80px;background:#b5b5b5;"></div>
<div class="r" style="left:675.70px;top:538.96px;width:8.10px;height:0.80px;background:#b5b5b5;"></div>
<div class="r" style="left:744.30px;top:538.96px;width:8.10px;height:0.80px;background:#b5b5b5;"></div>
<div class="r" style="left:768.00px;top:532.96px;width:2.60px;height:11.00px;background:#9ec5ee;"></div>
<div class="r" style="left:771.00px;top:543.56px;width:32.00px;height:1.00px;background:repeating-linear-gradient(90deg, #dedede 0 1.6px, transparent 1.6px 2.8px);"></div>
<svg class="r" style="left:832.00px;top:534.06px" width="9" height="9" viewBox="0 0 10 10"><circle cx="5" cy="5" r="5" fill="#a0a0a0"/><path d="M3.3 3.9 C3.3 2.8 4.1 2.2 5 2.2 C6 2.2 6.7 2.8 6.7 3.7 C6.7 4.7 5.3 4.9 5.3 6.1" fill="none" stroke="#fff" stroke-width="1.3"/><circle cx="5.3" cy="7.6" r="0.75" fill="#fff"/></svg>
<div class="r" style="left:855.60px;top:534.10px;width:1.80px;height:1.80px;background:#999;border-radius:0.6px"></div>
<div class="r" style="left:855.60px;top:537.10px;width:1.80px;height:1.80px;background:#999;border-radius:0.6px"></div>
<div class="r" style="left:855.60px;top:540.10px;width:1.80px;height:1.80px;background:#999;border-radius:0.6px"></div>
<div class="r" style="left:123.00px;top:548.66px;width:739.00px;height:0.80px;background:#efefef;"></div>
<svg class="r" style="left:122.9px;top:554.68px" width="8.6" height="8.6" viewBox="0 0 10 10"><circle cx="5" cy="5" r="5" fill="#f7c400"/><rect x="4.35" y="4.1" width="1.3" height="3.8" fill="#fff"/><rect x="4.35" y="2.1" width="1.3" height="1.3" fill="#fff"/></svg>
<div class="t" style="left:137.10px;top:555.07px;font-size:8.25px;color:#555;">Page has links to redirect</div>
<div class="t" style="right:472.70px;top:555.07px;font-size:8.25px;color:#555;">329</div>
<div class="r" style="left:471.10px;top:559.68px;width:8.10px;height:0.80px;background:#b5b5b5;"></div>
<div class="r" style="left:539.50px;top:559.68px;width:8.10px;height:0.80px;background:#b5b5b5;"></div>
<div class="r" style="left:607.60px;top:559.68px;width:8.10px;height:0.80px;background:#b5b5b5;"></div>
<div class="r" style="left:675.70px;top:559.68px;width:8.10px;height:0.80px;background:#b5b5b5;"></div>
<div class="r" style="left:744.30px;top:559.68px;width:8.10px;height:0.80px;background:#b5b5b5;"></div>
<div class="r" style="left:768.00px;top:553.68px;width:2.60px;height:11.00px;background:#9ec5ee;"></div>
<div class="r" style="left:771.00px;top:564.28px;width:32.00px;height:1.00px;background:repeating-linear-gradient(90deg, #dedede 0 1.6px, transparent 1.6px 2.8px);"></div>
<svg class="r" style="left:832.00px;top:554.78px" width="9" height="9" viewBox="0 0 10 10"><circle cx="5" cy="5" r="5" fill="#a0a0a0"/><path d="M3.3 3.9 C3.3 2.8 4.1 2.2 5 2.2 C6 2.2 6.7 2.8 6.7 3.7 C6.7 4.7 5.3 4.9 5.3 6.1" fill="none" stroke="#fff" stroke-width="1.3"/><circle cx="5.3" cy="7.6" r="0.75" fill="#fff"/></svg>
<div class="r" style="left:855.60px;top:555.10px;width:1.80px;height:1.80px;background:#999;border-radius:0.6px"></div>
<div class="r" style="left:855.60px;top:558.10px;width:1.80px;height:1.80px;background:#999;border-radius:0.6px"></div>
<div class="r" style="left:855.60px;top:561.10px;width:1.80px;height:1.80px;background:#999;border-radius:0.6px"></div>
<div class="r" style="left:113.30px;top:569.08px;width:758.40px;height:0.80px;background:#efefef;"></div>
<svg class="r" style="left:0;top:0" width="884" height="575"><path d="M568.8 60.6 L571.6 62.0 L561.2 80.8 L567.6 83.2 L545.0 93.0 L549.4 69.6 L554.0 75.0 Z" fill="#ff0000" stroke="#ff0000" stroke-width="3.2" stroke-linejoin="round"/><path d="M309.6 318.6 L312.2 320.4 L299.2 361.4 L309.2 364.8 L278.4 387.0 L276.6 348.0 L284.8 353.0 Z" fill="#ff0000" stroke="#ff0000" stroke-width="3.2" stroke-linejoin="round"/></svg>
</body></html>
